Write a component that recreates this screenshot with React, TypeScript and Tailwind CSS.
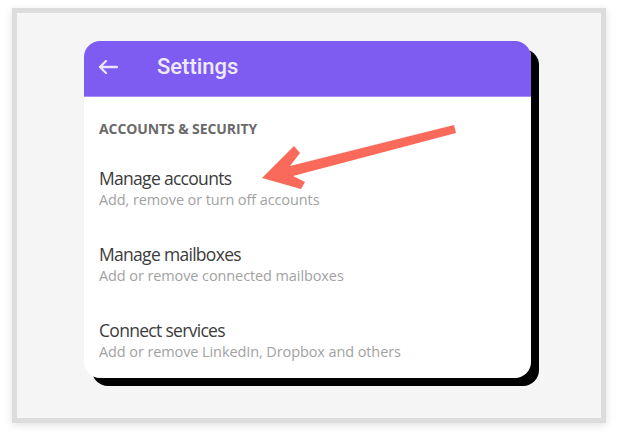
import { ReactNode } from 'react';

const rows = [
  { title: 'Manage accounts', sub: 'Add, remove or turn off accounts' },
  { title: 'Manage mailboxes', sub: 'Add or remove connected mailboxes' },
  { title: 'Connect services', sub: 'Add or remove LinkedIn, Dropbox and others' },
];

function SettingRow({ title, sub }: { title: string; sub: string }) {
  return (
    <div className="flex flex-col">
      <div className="text-[17.5px] leading-6 text-[#3c3c3c] tracking-[-0.7px]">{title}</div>
      <div className="mt-px text-[14.5px] leading-[18px] text-[#a2a2a2] tracking-[-0.1px]">{sub}</div>
    </div>
  );
}

function Frame({ children }: { children: ReactNode }) {
  return (
    <div className="w-[594px] h-[415px] border-[5px] border-[#dcdcdc] bg-[#f5f5f5] shadow-[0_2px_8px_rgba(0,0,0,0.12)]">
      {children}
    </div>
  );
}

export default function App() {
  return (
    <div className="relative w-[618px] h-[436px] bg-white pl-[12px] pt-[8px] font-['Open_Sans',sans-serif]">
      <Frame>
        <div className="pl-[67px] pt-[28px]">
          <div className="w-[447px] h-[337px] rounded-[16px] bg-white shadow-[8px_8px_0_#000] overflow-hidden flex flex-col">
            <div className="h-[56px] shrink-0 bg-[#7e5bf1] border-b border-[#a58cf6] flex items-center pl-[14px] pb-[4px]">
              <svg width="20" height="14" viewBox="0 0 20 14" fill="none" stroke="#ebe4ff" strokeWidth="2.3" strokeLinecap="round" strokeLinejoin="round">
                <path d="M19 7H2M8 1L2 7l6 6" />
              </svg>
              <span className="ml-[39px] font-['Roboto',sans-serif] font-medium text-[22px] leading-none text-[#efe9ff]">
                Settings
              </span>
            </div>
            <div className="pl-[15px] pt-[24px] flex flex-col">
              <div className="text-[14px] leading-4 font-bold text-[#6a6a6a] tracking-[-0.1px]">
                ACCOUNTS &amp; SECURITY
              </div>
              <div className="mt-[29px] flex flex-col gap-[33px]">
                {rows.map(r => (
                  <SettingRow key={r.title} title={r.title} sub={r.sub} />
                ))}
              </div>
            </div>
          </div>
        </div>
      </Frame>
      <svg className="absolute left-0 top-0 pointer-events-none" width="618" height="436" viewBox="0 0 618 436">
        <polygon
          fill="#fa6a5a"
          points="262,178 294,146 300,153 290,166 454,125 456,133 293,176 305,182 301,189"
        />
      </svg>
    </div>
  );
}
